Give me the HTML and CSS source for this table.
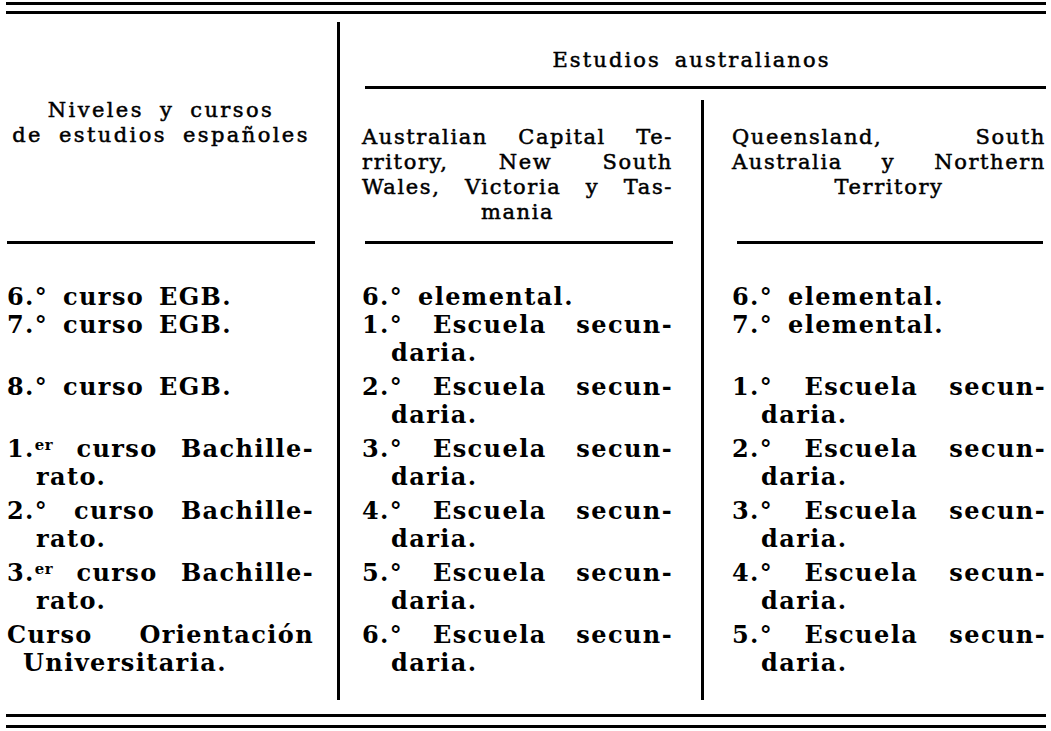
FILE: index.html
```html
<!DOCTYPE html>
<html lang="es">
<head>
<meta charset="utf-8">
<title>Equivalencias de estudios</title>
<link rel="stylesheet" href="styles.css">
</head>
<body>
<div class="page">
  <div class="rule-double"></div>
  <div class="grid">
    <div class="h-es">
      <div>Niveles y cursos</div>
      <div>de estudios españoles</div>
    </div>
    <div class="vline v1"></div>
    <div class="h-au">Estudios australianos</div>
    <div class="h-sub h-act">
      <div class="j">Australian Capital Te-</div>
      <div class="j">rritory, New South</div>
      <div class="j">Wales, Victoria y Tas-</div>
      <div class="c">mania</div>
    </div>
    <div class="vline v2"></div>
    <div class="h-sub h-qld">
      <div class="j">Queensland, South</div>
      <div class="j">Australia y Northern</div>
      <div class="c">Territory</div>
    </div>

    <div class="spacer"></div>

    <div class="cell c1 r1"><div>6.° curso EGB.</div></div>
    <div class="cell c2 r1"><div>6.° elemental.</div></div>
    <div class="cell c3 r1"><div>6.° elemental.</div></div>

    <div class="cell c1 r2"><div>7.° curso EGB.</div></div>
    <div class="cell c2 r2"><div class="j">1.° Escuela secun-</div><div class="k">daria.</div></div>
    <div class="cell c3 r2"><div>7.° elemental.</div></div>

    <div class="cell c1 r3"><div>8.° curso EGB.</div></div>
    <div class="cell c2 r3"><div class="j">2.° Escuela secun-</div><div class="k">daria.</div></div>
    <div class="cell c3 r3"><div class="j">1.° Escuela secun-</div><div class="k">daria.</div></div>

    <div class="cell c1 r4"><div class="j">1.<span class="sup">er</span> curso Bachille-</div><div class="k">rato.</div></div>
    <div class="cell c2 r4"><div class="j">3.° Escuela secun-</div><div class="k">daria.</div></div>
    <div class="cell c3 r4"><div class="j">2.° Escuela secun-</div><div class="k">daria.</div></div>

    <div class="cell c1 r5"><div class="j">2.° curso Bachille-</div><div class="k">rato.</div></div>
    <div class="cell c2 r5"><div class="j">4.° Escuela secun-</div><div class="k">daria.</div></div>
    <div class="cell c3 r5"><div class="j">3.° Escuela secun-</div><div class="k">daria.</div></div>

    <div class="cell c1 r6"><div class="j">3.<span class="sup">er</span> curso Bachille-</div><div class="k">rato.</div></div>
    <div class="cell c2 r6"><div class="j">5.° Escuela secun-</div><div class="k">daria.</div></div>
    <div class="cell c3 r6"><div class="j">4.° Escuela secun-</div><div class="k">daria.</div></div>

    <div class="cell c1 r7"><div class="j">Curso Orientación</div><div class="ks">Universitaria.</div></div>
    <div class="cell c2 r7"><div class="j">6.° Escuela secun-</div><div class="k">daria.</div></div>
    <div class="cell c3 r7"><div class="j">5.° Escuela secun-</div><div class="k">daria.</div></div>
  </div>
  <div class="rule-double bottom"></div>
</div>
</body>
</html>
```

FILE: styles.css
```css
html, body {
  margin: 0;
  background: #fff;
  color: #000;
}

body {
  font-family: "DejaVu Serif", "Liberation Serif", serif;
}

.page {
  width: 1040px;
  margin-left: 6px;
  padding-top: 2px;
}

.rule-double {
  border-top: 3px solid #000;
  border-bottom: 3px solid #000;
  height: 6px;
}

.rule-double.bottom {
  height: 8px;
}

.grid {
  display: grid;
  grid-template-columns: 308px 48px 311px 59px 314px;
  grid-template-rows: auto auto 39px 28px repeat(5, 62px) auto 37px;
}

/* header cells */
.h-es,
.h-au,
.h-sub {
  font-size: 21px;
  line-height: 25px;
  -webkit-text-stroke: 0.5px #000;
}

.h-es {
  grid-column: 1;
  grid-row: 1 / 3;
  padding-top: 84px;
  margin-left: 1px;
  margin-right: -1px;
  text-align: center;
  letter-spacing: 2.4px;
  word-spacing: 7px;
  border-bottom: 3px solid #000;
}

.vline {
  width: 3px;
  background: #000;
  justify-self: center;
}

.v1 {
  grid-column: 2;
  grid-row: 1 / -1;
  margin: 8px 0 14px;
}

.v2 {
  grid-column: 4;
  grid-row: 2 / -1;
  margin: 11px 0 14px;
}

.h-au {
  grid-column: 3 / 6;
  grid-row: 1;
  margin-left: 3px;
  padding: 34px 28px 13px 0;
  text-align: center;
  letter-spacing: 2.1px;
  word-spacing: 5px;
  border-bottom: 3px solid #000;
}

.h-sub {
  grid-row: 2;
  padding-top: 36px;
  padding-bottom: 19px;
  letter-spacing: 1.6px;
  background-repeat: no-repeat;
  background-image: linear-gradient(#000, #000);
}

.h-act {
  grid-column: 3;
  background-position: 3px 100%;
  background-size: 308px 3px;
}

.h-qld {
  grid-column: 5;
  background-position: 5px 100%;
  background-size: 306px 3px;
}

.j {
  text-align: justify;
  text-align-last: justify;
}

.c {
  text-align: center;
}

.spacer {
  grid-column: 1;
  grid-row: 3;
}

/* data cells */
.cell {
  font-size: 24px;
  font-weight: bold;
  line-height: 28px;
  letter-spacing: 1.4px;
  word-spacing: 5px;
}

.c1 { grid-column: 1; margin-left: 1px; }
.c2 { grid-column: 3; }
.c3 { grid-column: 5; }

.r1 { grid-row: 4; }
.r2 { grid-row: 5; }
.r3 { grid-row: 6; }
.r4 { grid-row: 7; }
.r5 { grid-row: 8; }
.r6 { grid-row: 9; }
.r7 { grid-row: 10; }

.k {
  padding-left: 29px;
}

.ks {
  padding-left: 16px;
}

.sup {
  font-size: 0.62em;
  vertical-align: 0.5em;
  line-height: 0;
  letter-spacing: 0.5px;
}
```
